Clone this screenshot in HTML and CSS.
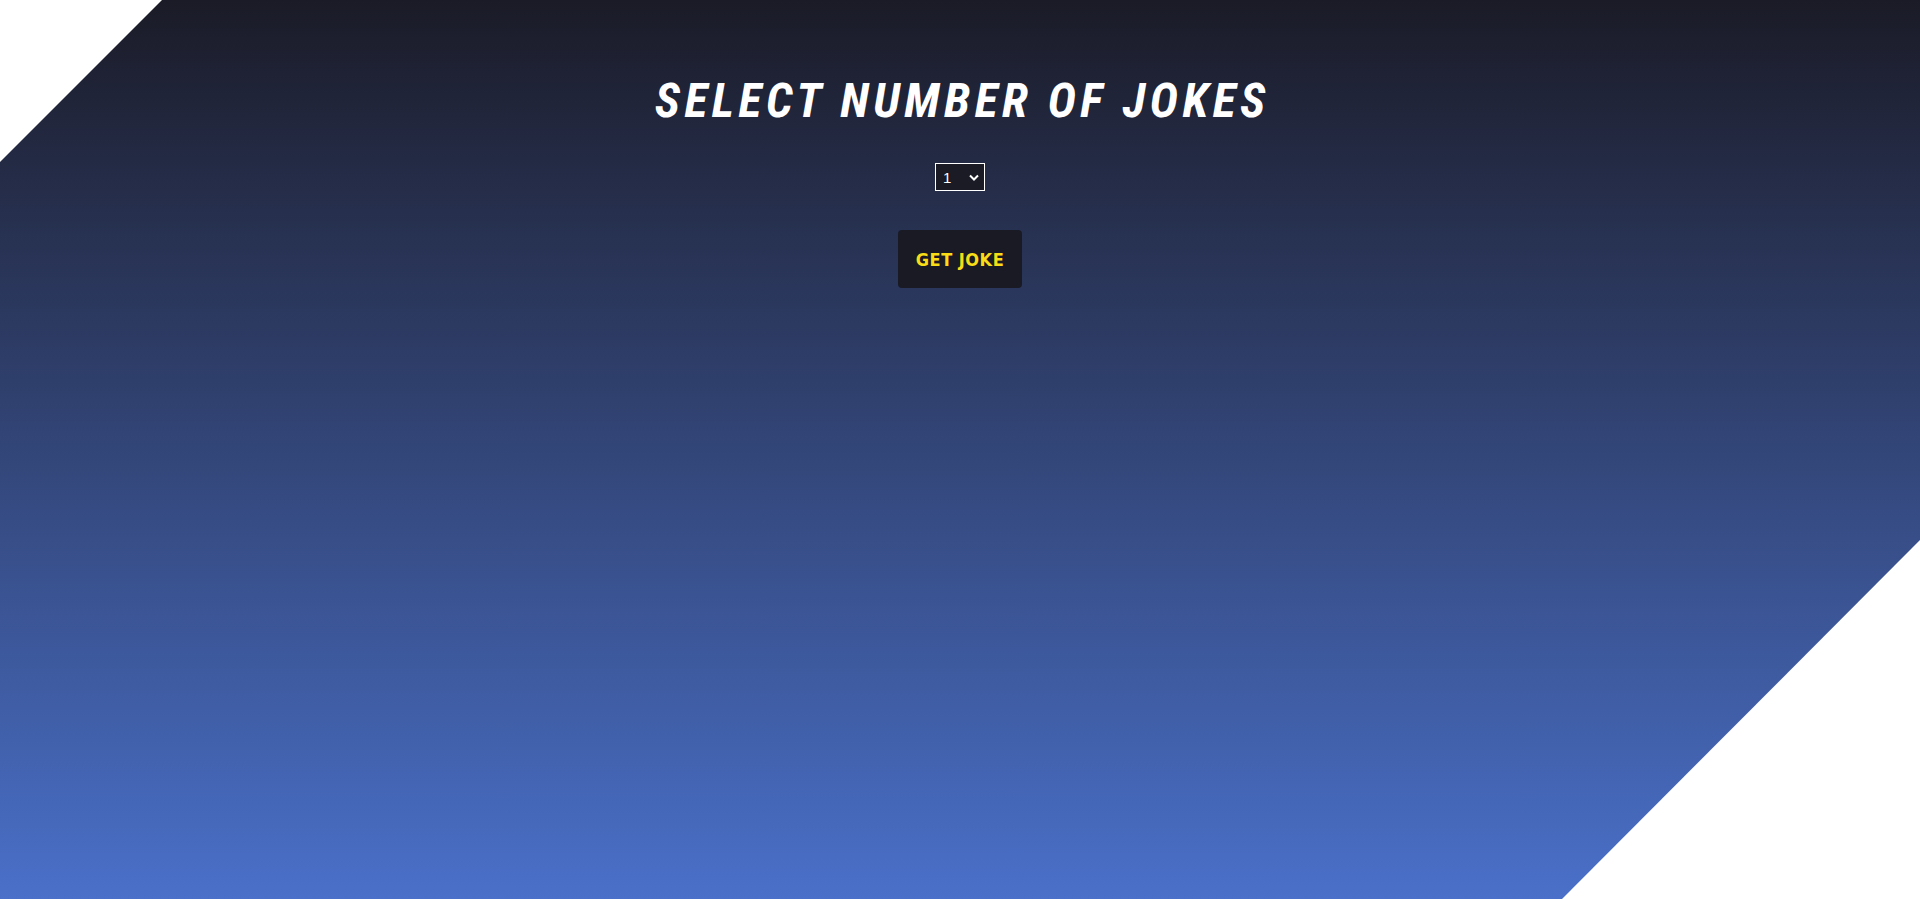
FILE: index.html
```html
<!DOCTYPE html>
<html lang="en">
<head>
<meta charset="utf-8">
<title>Jokes</title>
<link rel="stylesheet" href="styles.css">
</head>
<body>
<main class="page">
  <h1 class="title">SELECT NUMBER OF JOKES</h1>
  <div class="select-wrap">
    <select class="count">
      <option>1</option>
      <option>2</option>
      <option>3</option>
      <option>4</option>
      <option>5</option>
    </select>
    <svg class="chev" width="10" height="7" viewBox="0 0 10 7"><path d="M1 1.5 L5 5.5 L9 1.5" fill="none" stroke="#fff" stroke-width="2"/></svg>
  </div>
  <button class="btn">GET JOKE</button>
</main>
</body>
</html>
```
FILE: styles.css
```css
html, body {
  margin: 0;
  padding: 0;
  background: #fff;
  height: 100%;
}
.page {
  height: 899px;
  background: linear-gradient(to bottom, #1b1b27 0%, #4a70c9 100%);
  clip-path: polygon(162px 0, 100% 0, 100% 540px, 1562px 100%, 0 100%, 0 162px);
  display: flex;
  flex-direction: column;
  align-items: center;
  box-sizing: border-box;
  padding-top: 73px;
}
.title {
  margin: 0;
  font-family: "Roboto Condensed", "Liberation Sans Narrow", Roboto, sans-serif;
  font-style: italic;
  font-weight: 700;
  font-size: 48px;
  line-height: 56px;
  letter-spacing: 4.5px;
  padding-left: 4.5px;
  color: #fff;
}
.select-wrap {
  position: relative;
  margin-top: 34px;
  width: 50px;
  height: 28px;
}
.count {
  appearance: none;
  -webkit-appearance: none;
  width: 50px;
  height: 28px;
  box-sizing: border-box;
  border: 1px solid #fff;
  border-radius: 0;
  background: #1a1b25;
  color: #fff;
  font-family: "Liberation Sans", Arial, sans-serif;
  font-size: 15px;
  padding: 0 0 0 7px;
  outline: none;
}
.chev {
  position: absolute;
  right: 6px;
  top: 11px;
  pointer-events: none;
}
.btn {
  margin-top: 39px;
  width: 124px;
  height: 58px;
  border: none;
  border-radius: 4px;
  background: #191a24;
  color: #f7dc16;
  font-family: "DejaVu Sans Condensed", "DejaVu Sans", Verdana, sans-serif;
  font-weight: 700;
  font-size: 18px;
  letter-spacing: 0.5px;
  cursor: pointer;
}
```
